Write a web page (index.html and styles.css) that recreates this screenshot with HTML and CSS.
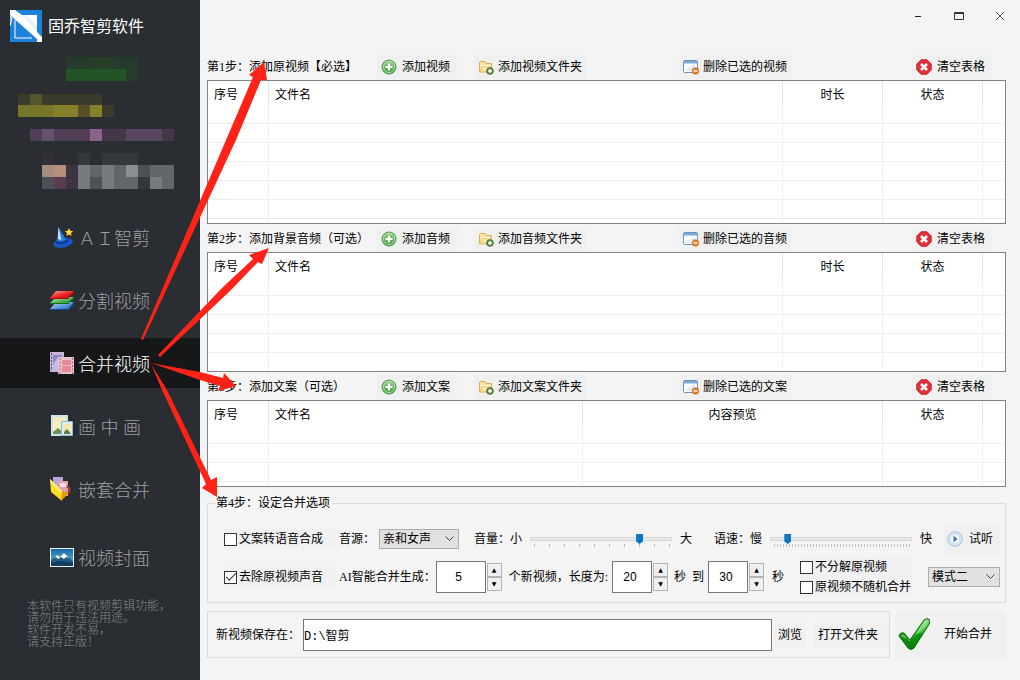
FILE: index.html
```html
<!DOCTYPE html>
<html lang="zh-CN">
<head>
<meta charset="utf-8">
<meta name="viewport" content="width=device-width, initial-scale=1">
<title>固乔智剪软件</title>
<link rel="stylesheet" href="styles.css">
</head>
<body>
<svg class="symbols" aria-hidden="true">
  <defs>
    <linearGradient id="green" x1="0" y1="0" x2="0" y2="1"><stop offset="0" stop-color="#9ad08c"/><stop offset="1" stop-color="#3f9a3c"/></linearGradient>
    <linearGradient id="tick" x1="0" y1="0" x2="0" y2="1"><stop offset="0" stop-color="#8fe08a"/><stop offset=".45" stop-color="#2fb52b"/><stop offset=".5" stop-color="#0f960f"/><stop offset="1" stop-color="#087a0a"/></linearGradient>
    <linearGradient id="lr" x1="0" y1="0" x2="1" y2="1"><stop offset="0" stop-color="#ffb0a8"/><stop offset=".5" stop-color="#ee2a2a"/><stop offset="1" stop-color="#b80808"/></linearGradient>
    <linearGradient id="lg" x1="0" y1="0" x2="1" y2="1"><stop offset="0" stop-color="#b4f0a8"/><stop offset="1" stop-color="#128a20"/></linearGradient>
    <linearGradient id="lb" x1="0" y1="0" x2="1" y2="1"><stop offset="0" stop-color="#b8dcff"/><stop offset="1" stop-color="#1a62b8"/></linearGradient>
    <linearGradient id="sky" x1="0" y1="0" x2="0" y2="1"><stop offset="0" stop-color="#1668a8"/><stop offset="1" stop-color="#7cc4ea"/></linearGradient>
  </defs>
  <symbol id="i-add" viewBox="0 0 16 16"><circle cx="8" cy="8" r="7" fill="url(#green)" stroke="#4f9a4c"/><circle cx="8" cy="8" r="5.6" fill="none" stroke="#c4e6bc" stroke-width=".8"/><path d="M8 4.500v7M4.500 8h7" stroke="#fff" stroke-width="2.200"/></symbol>
  <symbol id="i-folder" viewBox="0 0 16 16"><path d="M1.500 3.500V13h12V4.500H8L7 2.500H2.500z" fill="#f8e6a0" stroke="#d9b04c"/><path d="M3 6.500h9M3 8.500h6" stroke="#fffbe0"/><path d="M2 12.500 4 8h9" fill="none" stroke="#e6c263"/><circle cx="12" cy="12" r="3.300" fill="#5d9a45" stroke="#416e36"/><path d="M12 10v4M10 12h4" stroke="#fff" stroke-width="1.300"/></symbol>
  <symbol id="i-delete" viewBox="0 0 16 16"><rect x=".5" y="1.500" width="14" height="12" rx="1" fill="#fbfdff" stroke="#6f92bb"/><path d="M1 2h13v2.500H1z" fill="#7aa9d6"/><path d="M2 11 12 5v7H2z" fill="#e4eef8"/><circle cx="12.500" cy="12" r="3.300" fill="#ea8328" stroke="#b75d18" stroke-width=".6"/><path d="M10.500 12h4" stroke="#fff" stroke-width="1.300"/></symbol>
  <symbol id="i-clear" viewBox="0 0 16 16"><path d="M5 .8h6L15.200 5v6L11 15.200H5L.8 11V5z" fill="#e0303a" stroke="#c8222c" stroke-linejoin="round"/><path d="m5 5 6 6M11 5l-6 6" stroke="#fff" stroke-width="2.600"/></symbol>
  <symbol id="i-play" viewBox="0 0 16 16"><circle cx="8" cy="8" r="7.300" fill="#dce8f7" stroke="#a9bfda"/><circle cx="8" cy="8" r="5" fill="#f7fbff" stroke="#c9daee"/><path d="M6.500 4.500 10.500 8l-4 3.500z" fill="#3676bd"/></symbol>
</svg>

<div class="app">
  <aside class="side">
    <header class="brand">
      <svg class="brand-logo" viewBox="0 0 32 32" aria-hidden="true"><path d="M0 0h32v32H0z" fill="#1d82dc"/><path d="M0 0h5l7 5h15v17l5 5v5h-5L0 6z" fill="#fff"/><path d="M12 5h4l11 11v6z" fill="#e4f2fc"/><path d="M0 5 27 29v3H0z" fill="#1d82dc"/><path d="M0 6v10l2-8zM5 10v18h17" fill="none" stroke="#fff"/></svg>
      <h1 class="brand-name">固乔智剪软件</h1>
    </header>
    <svg class="mosaic" viewBox="0 0 200 144" aria-hidden="true">
      <path fill="#263b2c" d="M66 5h72v12H66zM126 17h12v12h-12z"/><path fill="#26402a" d="M90 5h24v12H90z"/><path fill="#235427" d="M66 17h60v12H66z"/>
      <path fill="#3a3b2b" d="M18 42h84v11H18zM102 53h12v12h-12z"/><path fill="#55552a" d="M30 42h12v11H30z"/><path fill="#77752a" d="M18 53h60v12H18z"/><path fill="#858029" d="M54 53h24v12H54zM90 53h12v12H90z"/><path fill="#555029" d="M78 53h12v12H78z"/>
      <path fill="#513e57" d="M30 77h60v12H30z"/><path fill="#65506e" d="M42 77h12v12H42z"/><path fill="#594660" d="M126 77h36v12h-36z"/><path fill="#89638b" d="M90 77h12v12H90z"/><path fill="#433748" d="M102 77h24v12h-24zM162 77h12v12h-12z"/>
      <path fill="#332f36" d="M42 101h12v12H42z"/><path fill="#36393c" d="M102 101h36v12h-36zM78 101h12v12H78z"/>
      <path fill="#a58d7d" d="M42 113h24v12H42z"/><path fill="#b58f7c" d="M54 113h12v12H54z"/><path fill="#3c3440" d="M66 113h12v24H66z"/><path fill="#4c5158" d="M42 125h12v12H42z"/><path fill="#5a3e50" d="M54 125h12v12H54z"/>
      <path fill="#626669" d="M78 113h96v24H78z"/><path fill="#787b7e" d="M78 113h12v24H78zM102 113h12v24h-12zM150 125h12v12h-12z"/><path fill="#8b8e90" d="M126 113h12v12h-12z"/><path fill="#4d5154" d="M90 125h12v12H90zM138 113h12v12h-12z"/><path fill="#34373b" d="M138 125h12v12h-12z"/>
    </svg>
    <nav class="nav">
      <a class="nav-item" href="#ai"><svg class="nav-icon" viewBox="0 0 24 24"><ellipse cx="13" cy="18" rx="10" ry="4.500" fill="#1c56c4" transform="rotate(-12 13 18)"/><path d="M7 16 8.500 2l8 13q-5 4-9.500 1z" fill="#2f7ae0"/><path d="m8.500 2-.6 12 3.600 1z" fill="#c8e6ff"/><path d="M6 17q6 3 12-2" fill="none" stroke="#0b348c" stroke-width="2"/><path d="m19 3 1.200 2.800 3 .3-2.200 2 .6 3-2.600-1.600L16.400 11l.6-3-2.200-2 3-.3z" fill="#ffd640"/></svg><span>ＡＩ智剪</span></a>
      <a class="nav-item" href="#split"><svg class="nav-icon" viewBox="0 0 24 24"><path d="M6 14h18l-6 7H0z" fill="url(#lb)"/><path d="M0 21h18l6-7v3l-5 5H0z" fill="#124a8c"/><path d="M6 9h18l-6 6H0z" fill="url(#lg)"/><path d="M0 15h18l6-6v2l-6 5H0z" fill="#0d6e18"/><path d="M6 3h18l-6 7H0z" fill="url(#lr)"/><path d="M0 10h18l6-7v2l-6 6H0z" fill="#a80b0b"/></svg><span>分割视频</span></a>
      <a class="nav-item nav-item-active" href="#merge" aria-current="page"><svg class="nav-icon" viewBox="0 0 24 24"><path d="M0 1h14v20H0z" fill="#c9b6d6"/><path d="M3 4h9v14H3z" fill="#8b84c8"/><path d="m3 14 4-7 5 6v5H3z" fill="#c3bce8"/><path d="M1.500 2v18" stroke="#5e4a70" stroke-dasharray="2 1.500"/><path d="M8 6h16v17H8z" fill="#e9c3cc"/><path d="M12 9h9v5h-9zM12 15h9v6h-9z" fill="#e8889b"/><path d="M10 7v16M22.500 7v16" stroke="#9d6476" stroke-dasharray="2 1.500"/></svg><span>合并视频</span></a>
      <a class="nav-item" href="#pip"><svg class="nav-icon" viewBox="0 0 24 24"><path d="M1 1h17v21H1z" fill="#c9e4f0"/><path d="M3 3h13v17H3z" fill="#f5edba"/><path d="m3 18 5-4 7 6H3z" fill="#73935a"/><path d="M11.500 7.500h11v14h-11z" fill="#d9eef6" stroke="#8fb8cc"/><path d="M14 10h7v10h-7z" fill="#f3eaa8"/><path d="m14 18 3-3 4 5h-7z" fill="#56784c"/></svg><span>画 中 画</span></a>
      <a class="nav-item" href="#nest"><svg class="nav-icon" viewBox="0 0 24 24"><path d="M3 0h10v12H3z" fill="#b9a7d8"/><path d="M8 4h10v15H8z" fill="#e3a0b0"/><path d="M10 6h6v4h-6z" fill="#fae0e6"/><path d="M17 9q5 4 0 8" fill="none" stroke="#a83a3a" stroke-width="2"/><path d="m0 2 12 12v10L1 15z" fill="#ffdc28"/><path d="m12 14 7 2-8 8z" fill="#e2a000"/><path d="m0 2 12 12v3L0 5z" fill="#fff07a"/></svg><span>嵌套合并</span></a>
      <a class="nav-item nav-item-last" href="#cover"><svg class="nav-icon" viewBox="0 0 24 24"><path d="M0 3h24v19H0z" fill="#e6f2f8"/><path d="M1 4h22v17H1z" fill="url(#sky)"/><path d="m1 15 6-5 3 2 4-4 9 8v5H1z" fill="#235d86"/><path d="m4 13 3-3 3 2 4-4 5 5-3-1-2 2-3-2-3 2-2-2z" fill="#fff"/><path d="M1 18q10-4 22 0v3H1z" fill="#123c5c"/></svg><span>视频封面</span></a>
    </nav>
    <p class="notice">本软件只有视频剪辑功能，<br>请勿用于违法用途。<br>软件开发不易，<br>请支持正版！</p>
  </aside>

  <main class="main">
    <div class="titlebar">
      <button class="win-btn" aria-label="最小化"><svg viewBox="0 0 12 12"><path d="M3 6.500h6" stroke="#222"/></svg></button>
      <button class="win-btn" aria-label="最大化"><svg viewBox="0 0 12 12"><path d="M1.500 2.500h9v7h-9zM1.500 3.500h9" fill="none" stroke="#333"/></svg></button>
      <button class="win-btn" aria-label="关闭"><svg viewBox="0 0 12 12"><path d="m2 2 8 8M10 2l-8 8" stroke="#555"/></svg></button>
    </div>

    <section>
      <div class="toolbar">
        <h2 class="step">第1步：添加原视频【必选】</h2>
        <button class="btn btn-wide"><svg class="icon"><use href="#i-add"/></svg>添加视频</button>
        <button class="btn"><svg class="icon"><use href="#i-folder"/></svg>添加视频文件夹</button>
        <button class="btn"><svg class="icon"><use href="#i-delete"/></svg>删除已选的视频</button>
        <button class="btn btn-wide"><svg class="icon"><use href="#i-clear"/></svg>清空表格</button>
      </div>
      <div class="list">
        <table class="grid">
          <colgroup><col class="c-no"><col><col class="c-small"><col class="c-small"><col class="c-end"></colgroup>
          <thead><tr><th class="left">序号</th><th class="left">文件名</th><th>时长</th><th>状态</th><th></th></tr></thead>
          <tbody>
            <tr><td></td><td></td><td></td><td></td><td></td></tr>
            <tr><td></td><td></td><td></td><td></td><td></td></tr>
            <tr><td></td><td></td><td></td><td></td><td></td></tr>
            <tr><td></td><td></td><td></td><td></td><td></td></tr>
            <tr><td></td><td></td><td></td><td></td><td></td></tr>
            <tr><td></td><td></td><td></td><td></td><td></td></tr>
            <tr class="rest"><td></td><td></td><td></td><td></td><td></td></tr>
          </tbody>
        </table>
      </div>
    </section>

    <section>
      <div class="toolbar">
        <h2 class="step">第2步：添加背景音频（可选）</h2>
        <button class="btn btn-wide"><svg class="icon"><use href="#i-add"/></svg>添加音频</button>
        <button class="btn"><svg class="icon"><use href="#i-folder"/></svg>添加音频文件夹</button>
        <button class="btn"><svg class="icon"><use href="#i-delete"/></svg>删除已选的音频</button>
        <button class="btn btn-wide"><svg class="icon"><use href="#i-clear"/></svg>清空表格</button>
      </div>
      <div class="list">
        <table class="grid">
          <colgroup><col class="c-no"><col><col class="c-small"><col class="c-small"><col class="c-end"></colgroup>
          <thead><tr><th class="left">序号</th><th class="left">文件名</th><th>时长</th><th>状态</th><th></th></tr></thead>
          <tbody>
            <tr><td></td><td></td><td></td><td></td><td></td></tr>
            <tr><td></td><td></td><td></td><td></td><td></td></tr>
            <tr><td></td><td></td><td></td><td></td><td></td></tr>
            <tr><td></td><td></td><td></td><td></td><td></td></tr>
            <tr class="rest rest-tall"><td></td><td></td><td></td><td></td><td></td></tr>
          </tbody>
        </table>
      </div>
    </section>

    <section>
      <div class="toolbar">
        <h2 class="step">第3步：添加文案（可选）</h2>
        <button class="btn btn-wide"><svg class="icon"><use href="#i-add"/></svg>添加文案</button>
        <button class="btn"><svg class="icon"><use href="#i-folder"/></svg>添加文案文件夹</button>
        <button class="btn"><svg class="icon"><use href="#i-delete"/></svg>删除已选的文案</button>
        <button class="btn btn-wide"><svg class="icon"><use href="#i-clear"/></svg>清空表格</button>
      </div>
      <div class="list">
        <table class="grid">
          <colgroup><col class="c-no"><col><col class="c-preview"><col class="c-small"><col class="c-end"></colgroup>
          <thead><tr><th class="left">序号</th><th class="left">文件名</th><th>内容预览</th><th>状态</th><th></th></tr></thead>
          <tbody>
            <tr><td></td><td></td><td></td><td></td><td></td></tr>
            <tr><td></td><td></td><td></td><td></td><td></td></tr>
            <tr><td></td><td></td><td></td><td></td><td></td></tr>
            <tr class="rest"><td></td><td></td><td></td><td></td><td></td></tr>
          </tbody>
        </table>
      </div>
    </section>

    <fieldset class="options">
      <legend>第4步：设定合并选项</legend>
      <div class="row">
        <label class="check check-lead"><input type="checkbox">文案转语音合成</label>
        <label class="field-label" for="voice">音源：</label>
        <select id="voice" class="select"><option>亲和女声</option></select>
        <div class="range-group">
          <label for="volume">音量：小</label>
          <span class="range range-coarse"><input id="volume" type="range" min="0" max="100" value="79"></span>
          <span>大</span>
        </div>
        <div class="range-group">
          <label for="speed">语速：慢</label>
          <span class="range range-fine"><input id="speed" type="range" min="0" max="100" value="10"></span>
          <span>快</span>
        </div>
        <button class="btn btn-listen"><svg class="icon"><use href="#i-play"/></svg>试听</button>
      </div>
      <div class="row row-second">
        <label class="check check-lead"><input type="checkbox" checked>去除原视频声音</label>
        <label class="field-label" for="count">AI智能合并生成：</label>
        <span class="spin spin-count"><input id="count" type="text" value="5"><span class="spin-btns"><button aria-label="增加">▲</button><button aria-label="减少">▼</button></span></span>
        <label class="label-length" for="min">个新视频，长度为:</label>
        <span class="spin"><input id="min" type="text" value="20"><span class="spin-btns"><button aria-label="增加">▲</button><button aria-label="减少">▼</button></span></span>
        <label class="label-to" for="max">秒&nbsp; 到</label>
        <span class="spin"><input id="max" type="text" value="30"><span class="spin-btns"><button aria-label="增加">▲</button><button aria-label="减少">▼</button></span></span>
        <span class="unit">秒</span>
        <div class="checks">
          <label class="check"><input type="checkbox">不分解原视频</label>
          <label class="check"><input type="checkbox">原视频不随机合并</label>
        </div>
        <select class="select select-mode" aria-label="模式"><option>模式二</option></select>
      </div>
    </fieldset>

    <div class="bottom">
      <div class="save">
        <label for="path">新视频保存在：</label>
        <input id="path" class="path" type="text" value="D:\智剪">
        <button class="btn">浏览</button>
        <button class="btn btn-open">打开文件夹</button>
      </div>
      <button class="start"><svg viewBox="0 0 32 32" aria-hidden="true"><path d="M1 18q1-4 5-3l6 7L26 2q3-3 6 0 0 3-2 6L16 30q-3 3-6 0z" fill="url(#tick)" stroke="#0b6b10"/><path d="M3 18q1-2 3-1l5 6 2-1L27 3h3q-2 6-8 11-5 3-9 8-5-1-10-4z" fill="#b4f0ac" opacity=".55"/></svg>开始合并</button>
    </div>
  </main>

  <svg class="arrows" width="1020" height="680" viewBox="0 0 1020 680" aria-hidden="true">
    <path d="M141 339 226 140 253 77 249 75 264 62 267 80 261 80 236 140 143 340z"/>
    <path d="M158 355 222 288 253 259 249 255 269 248 262 264 258 262 231 290 160 357z"/>
    <path d="M151 363 200 372 223 378 224 373 236 386 218 391 220 386 200 380z"/>
    <path d="M151 364 167 390 211 480 217 477 217 497 202 488 206 484 162 390z"/>
  </svg>
</div>
</body>
</html>
```

FILE: styles.css
```css
* { box-sizing: border-box; }

body {
  margin: 0;
  background: #f4f4f4;
  color: #000;
  font: 12px/16px "Liberation Serif", "Noto Sans CJK SC", sans-serif;
}

button, input, select { font: inherit; color: inherit; }
button { border: 0; padding: 0; background: none; }

.symbols { position: absolute; width: 0; height: 0; }

.app {
  position: relative;
  display: grid;
  grid-template-columns: 200px minmax(0, 1fr);
  min-height: 100vh;
}

/* Sidebar */
.side { background: #2a2d31; color: #9c9ea1; }
.brand { display: flex; align-items: center; gap: 6px; height: 52px; padding-left: 10px; }
.brand-logo { width: 32px; height: 32px; }
.brand-name { margin: 0; padding-top: 2px; color: #fff; font-size: 16px; font-weight: 400; line-height: 24px; }
.mosaic { display: block; width: 100%; }

.nav { display: flex; flex-direction: column; gap: 13px; padding-top: 16px; }
.nav-item {
  display: flex;
  align-items: center;
  gap: 4px;
  height: 50px;
  padding-left: 50px;
  color: inherit;
  font-size: 18px;
  font-weight: 300;
  line-height: 24px;
  text-decoration: none;
}
.nav-item span { padding-top: 4px; }
.nav-item-active { background: #151719; color: #fff; }
.nav-item-last { margin-top: 5px; }
.nav-icon { width: 24px; height: 24px; }
.notice { margin: 18px 0 0; padding-left: 27px; color: #85878a; font-weight: 300; line-height: 12px; white-space: nowrap; }

/* Main column */
.main {
  min-width: 0;
  padding: 0 14px 22px 7px;
  background: linear-gradient(90deg, #eff5fa, #f4f4f4 8px);
}
.titlebar { display: flex; justify-content: flex-end; height: 52px; }
.win-btn { display: grid; place-items: center; width: 41px; height: 32px; }
.win-btn:last-child { margin-right: -14px; }
.win-btn svg { width: 12px; height: 12px; }

.toolbar {
  display: grid;
  grid-template-columns: 170px 97px minmax(0, 1fr) 233px 94px;
  align-items: center;
  justify-items: start;
  height: 28px;
  padding-top: 2px;
}
.step { margin: 0; font-size: 12px; font-weight: 400; line-height: 16px; white-space: nowrap; }
.btn {
  display: flex;
  align-items: center;
  gap: 4px;
  height: 24px;
  padding: 0 4px;
  background: #f0f0f0;
  white-space: nowrap;
}
.btn-wide { gap: 5px; padding-right: 7px; }
.icon { width: 16px; height: 16px; }

.list { border: 1px solid #828282; background: #fff; }
.grid { width: 100%; table-layout: fixed; border-collapse: separate; border-spacing: 0; }
.c-no { width: 61px; }
.c-small { width: 100px; }
.c-preview { width: 300px; }
.c-end { width: 22px; }
.grid th { height: 24px; padding: 4px 0 0; border-right: 1px solid #e4e4e4; font-weight: 400; }
.grid .left { padding-left: 6px; text-align: left; }
.grid td { height: 19px; padding: 0; border-right: 1px solid #f0f0f0; border-bottom: 1px solid #ededed; }
.grid th:last-child, .grid td:last-child { border-right: 0; }
.grid .rest td { height: 4px; border-bottom: 0; }
.grid .rest-tall td { height: 18px; }

/* Merge options */
.options { min-width: 0; margin: 8px 0 0; padding: 12px 5px 6px 16px; border: 1px solid #dcdcdc; }
.options legend { margin-left: -8px; padding: 0 2px 0 0; }
.row { display: flex; align-items: center; height: 32px; white-space: nowrap; }
.row-second { height: 38px; margin-top: 3px; }
.check { display: flex; align-items: center; gap: 2px; height: 20px; background: #f0f0f0; }
.check input {
  display: grid;
  place-items: center;
  appearance: none;
  width: 13px;
  height: 13px;
  margin: 0;
  border: 1px solid #333;
  background: #fff;
}
.check input:checked::after {
  content: "";
  width: 9px;
  height: 4px;
  margin-bottom: 3px;
  border: solid #333;
  border-width: 0 0 1px 1px;
  transform: rotate(-45deg);
}
.check-lead { width: 112px; }
.field-label { margin-left: 3px; }
.select {
  appearance: none;
  width: 80px;
  height: 20px;
  margin-left: 4px;
  padding: 0 3px;
  border: 1px solid #adadad;
  border-radius: 0;
  background: #e1e1e1 url("data:image/svg+xml,%3Csvg xmlns='http://www.w3.org/2000/svg' width='9' height='6'%3E%3Cpath d='M.5.5l4 4 4-4' fill='none' stroke='%23444'/%3E%3C/svg%3E") no-repeat right 4px center;
}
.select-mode { width: 72px; margin-left: auto; }
.range-group { display: flex; flex: 1; align-items: center; gap: 6px; margin-left: 15px; }
.range-group + .range-group { margin-left: 22px; }
.range { flex: 1; min-width: 0; height: 16px; padding: 0 2px; }
.range input { display: block; appearance: none; width: 100%; height: 16px; margin: 0; background: repeating-linear-gradient(90deg, #bcbcbc 0 1px, transparent 1px 15px) 4px 13px / calc(100% - 6px) 3px no-repeat; }
.range-fine input { background-image: repeating-linear-gradient(90deg, #c4c4c4 0 1px, transparent 1px 3px); }
.range input::-webkit-slider-runnable-track { height: 4px; border: 1px solid #d6d6d6; background: #e7eaea; }
.range input::-webkit-slider-thumb {
  appearance: none;
  width: 7px;
  height: 10px;
  margin-top: -4px;
  background: #0f75c5;
  clip-path: polygon(0 0, 100% 0, 100% 75%, 50% 100%, 0 75%);
}
.btn-listen { height: 30px; gap: 6px; margin-left: 12px; padding: 0 7px 0 3px; }

.spin { display: flex; align-items: center; gap: 1px; margin-left: 4px; }
.spin input {
  width: 40px;
  height: 32px;
  padding: 0 4px 0 0;
  border: 1px solid #777;
  background: #fff;
  font-family: "Liberation Sans", sans-serif;
  text-align: center;
}
.spin-count { margin-left: 0; }
.spin-count input { width: 50px; }
.spin-btns { display: grid; width: 15px; }
.spin-btns button { height: 14px; border: 1px solid #b4b4b4; background: #f0f0f0; font: 6px/10px "DejaVu Sans", sans-serif; }
.label-length { margin-left: 7px; }
.label-to { margin-left: 6px; }
.unit { margin-left: 8px; }
.checks { display: grid; margin-left: 16px; }

/* Output folder and start */
.bottom { display: flex; gap: 5px; margin-top: 7px; }
.save { display: flex; flex: 1; align-items: center; min-width: 0; margin-top: 1px; padding-left: 8px; border: 1px solid #dcdcdc; white-space: nowrap; }
.path { flex: 1; min-width: 0; height: 32px; margin: 0 2px 0 3px; padding: 0; border: 1px solid #777; background: #fff; font-family: "Liberation Mono", "Noto Sans CJK SC", monospace; }
.btn-open { margin-left: 8px; padding-right: 11px; }
.start { display: flex; align-items: center; gap: 14px; height: 48px; padding: 0 14px 0 3px; background: #f0f0f0; white-space: nowrap; }
.start svg { width: 32px; height: 34px; }

/* Callout arrows lie over both columns */
.arrows { position: absolute; inset: 0 auto auto 0; fill: #ff2317; pointer-events: none; }
```
